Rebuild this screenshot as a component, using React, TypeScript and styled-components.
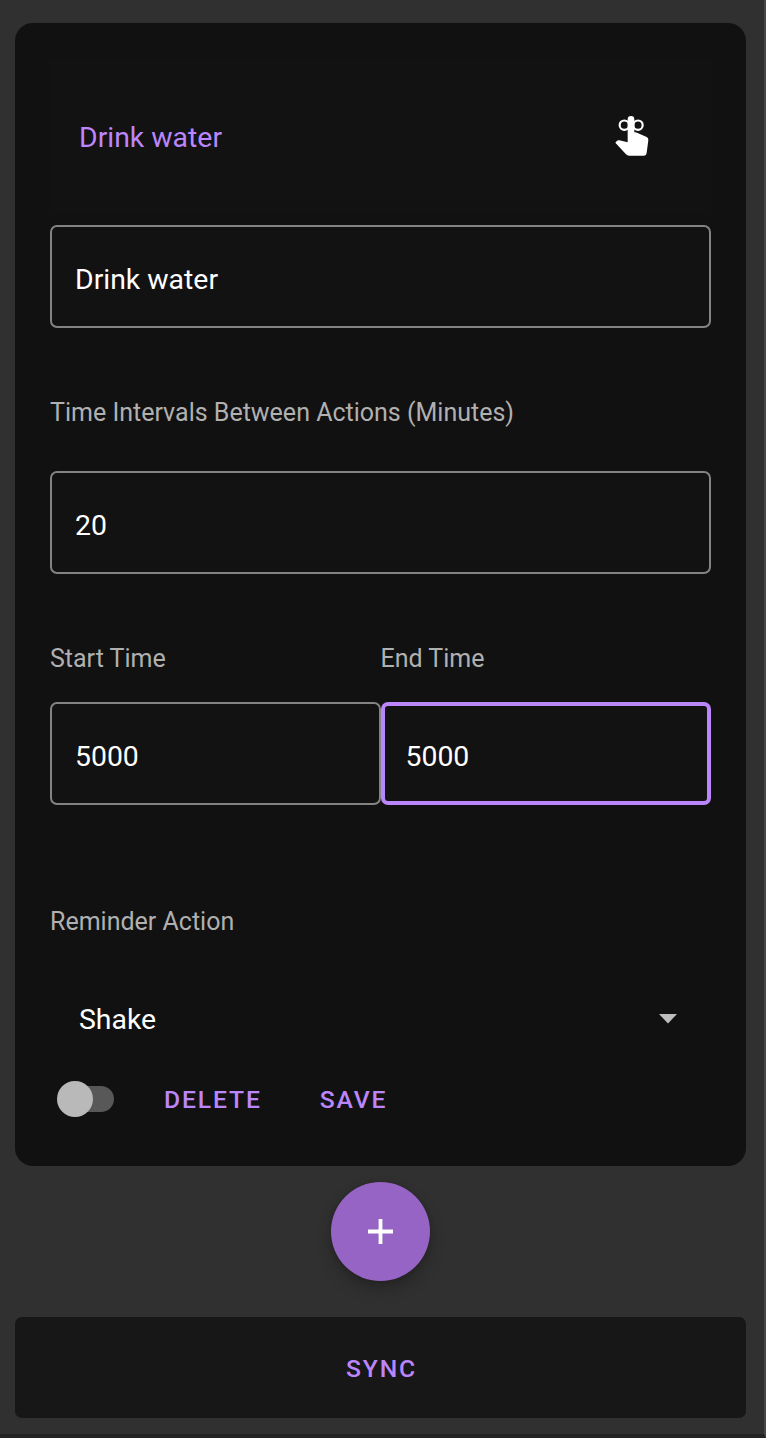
import React from "react";
import styled, { createGlobalStyle } from "styled-components";

const GlobalStyle = createGlobalStyle`
  *, *::before, *::after { box-sizing: border-box; }
  body { margin: 0; background: #303030; }
  button { font: inherit; border: 0; padding: 0; background: none; cursor: pointer; }
`;

const accent = "#bb86fc";

const Screen = styled.main`
  display: flex;
  flex-direction: column;
  align-items: center;
  height: 1438px;
  padding: 23px 18px 0 15px;
  background: #303030;
  border-right: 2px solid #484848;
  border-bottom: 4px solid #232323;
  font-family: Roboto, sans-serif;
  overflow: hidden;
`;

const Card = styled.section`
  display: flex;
  flex-direction: column;
  flex: none;
  width: 731px;
  height: 1143px;
  padding: 36px 35px 0;
  border-radius: 18px;
  background: #111111;
`;

const Header = styled.header`
  display: flex;
  align-items: center;
  justify-content: space-between;
  height: 155px;
  margin-bottom: 11px;
  padding: 2px 62px 0 29px;
  background: #121212;

  svg { margin-bottom: 4px; }
`;

const Title = styled.h1`
  margin: 0;
  color: ${accent};
  font-size: 28.4px;
  font-weight: 400;
  line-height: 34px;
`;

const Label = styled.div<{ $shift: number }>`
  display: flex;
  align-items: center;
  flex: 1 1 0;
  padding-top: ${(p) => p.$shift}px;
  color: #b0b0b0;
  font-size: 25px;
  white-space: nowrap;
`;

const Row = styled.div<{ $height: number }>`
  display: flex;
  flex: none;
  height: ${(p) => p.$height}px;
`;

const Field = styled.div<{ $focused?: boolean }>`
  display: flex;
  align-items: center;
  flex: none;
  width: 100%;
  height: 103px;
  padding: 7px 0 0 ${(p) => (p.$focused ? 21 : 23)}px;
  border: ${(p) => (p.$focused ? `4px solid ${accent}` : "2px solid #838383")};
  border-radius: 7px;
  background: #121212;
  color: #fff;
  font-size: 28.4px;
  line-height: 34px;
`;

const HalfField = styled(Field)`
  width: 50%;
`;

const Select = styled.div`
  display: flex;
  align-items: center;
  justify-content: space-between;
  height: 98px;
  padding: 0 34px 0 29px;
  color: #fff;
  font-size: 28.4px;
  line-height: 34px;

  svg { margin-bottom: 2px; }
`;

const Actions = styled.div`
  display: flex;
  align-items: center;
  height: 60px;
  padding-left: 7px;
`;

const Switch = styled.div`
  display: flex;
  align-items: center;
  width: 57px;
  height: 36px;
  margin-right: 50px;
`;

const Track = styled.span`
  flex: none;
  width: 50px;
  height: 26px;
  margin-left: 7px;
  border-radius: 13px;
  background: #585858;
`;

const Thumb = styled.span`
  flex: none;
  width: 36px;
  height: 36px;
  margin-left: -57px;
  border-radius: 50%;
  background: #b9b9b9;
`;

const TextButton = styled.button<{ $gap?: number }>`
  && {
    margin-right: ${(p) => p.$gap ?? 0}px;
    padding-top: 2px;
    color: ${accent};
    font-size: 24.7px;
    font-weight: 500;
    line-height: 30px;
    letter-spacing: 1.85px;
  }
`;

const AddButton = styled.button`
  && {
    display: grid;
    place-items: center;
    flex: none;
    width: 99px;
    height: 99px;
    margin: 16px 0 36px;
    border-radius: 50%;
    background: #9664c4;
    box-shadow: 0 8px 16px rgba(0, 0, 0, 0.22), 0 1px 5px rgba(0, 0, 0, 0.15);
  }
`;

const SyncButton = styled(TextButton)`
  && {
    flex: none;
    width: 731px;
    height: 101px;
    padding-left: 2px;
    border-radius: 7px;
    background: #171717;
  }
`;

const ReminderIcon = () => (
  <svg width="34" height="40" viewBox="74 78 102 120">
    <g fill="none" stroke="#fff" strokeWidth="6.500">
      <ellipse cx="102" cy="105.500" rx="14" ry="14" />
      <ellipse cx="143" cy="105.500" rx="14" ry="14" />
    </g>
    <path
      fill="#fff"
      d="M112 88a10 10 0 0 1 20 0v39q4-1 8 1l29 13q6 3 5 10l-5 37q-1 9-9 9h-44q-5 0-9-4L75 158l5-6q3-2 7-1l25 6z"
    />
  </svg>
);

export default function App() {
  return (
    <>
      <GlobalStyle />
      <Screen>
        <Card>
          <Header>
            <Title>Drink water</Title>
            <ReminderIcon />
          </Header>
          <Row $height={103}>
            <Field>Drink water</Field>
          </Row>
          <Row $height={143}>
            <Label $shift={25}>Time Intervals Between Actions (Minutes)</Label>
          </Row>
          <Row $height={103}>
            <Field>20</Field>
          </Row>
          <Row $height={128}>
            <Label $shift={40}>Start Time</Label>
            <Label $shift={40}>End Time</Label>
          </Row>
          <Row $height={103}>
            <HalfField>5000</HalfField>
            <HalfField $focused>5000</HalfField>
          </Row>
          <Row $height={166}>
            <Label $shift={67}>Reminder Action</Label>
          </Row>
          <Select>
            Shake
            <svg width="18" height="10" viewBox="0 0 18 10">
              <path d="M0 0h18l-9 9.500z" fill="#bdbdbd" />
            </svg>
          </Select>
          <Actions>
            <Switch role="switch" aria-checked={false}>
              <Track />
              <Thumb />
            </Switch>
            <TextButton $gap={58}>DELETE</TextButton>
            <TextButton>SAVE</TextButton>
          </Actions>
        </Card>
        <AddButton aria-label="Add reminder">
          <svg width="26" height="26" viewBox="0 0 26 26">
            <path d="M12.500 0v25M0 12.500h25" stroke="#fff" strokeWidth="3.800" />
          </svg>
        </AddButton>
        <SyncButton>SYNC</SyncButton>
      </Screen>
    </>
  );
}
